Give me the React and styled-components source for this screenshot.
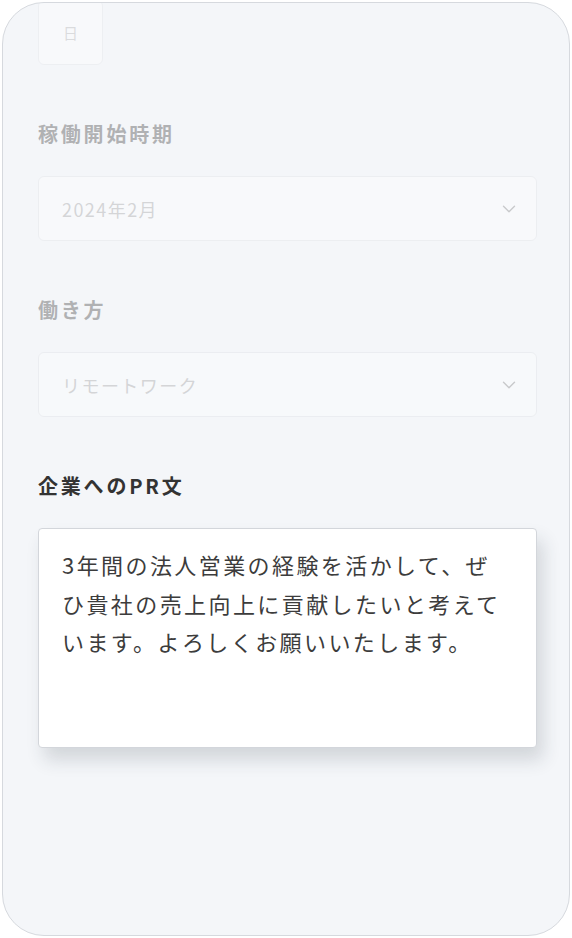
import React from "react";
import styled, { createGlobalStyle } from "styled-components";
import { ChevronDown } from "lucide-react";

const GlobalStyle = createGlobalStyle`
  html, body {
    margin: 0;
    padding: 0;
    background: #ffffff;
  }
  body {
    font-family: "Noto Sans CJK JP", "Noto Sans", sans-serif;
    color: #333;
  }
`;

const Frame = styled.div`
  box-sizing: border-box;
  margin: 2px;
  width: 568px;
  height: 934px;
  border: 1.5px solid #d6d9de;
  border-radius: 42px;
  background: #f4f6f9;
  overflow: hidden;
  padding: 0 33px 0 35px;
`;

const Faded = styled.div`
  opacity: 0.35;
  display: flex;
  flex-direction: column;
  gap: 54px;
`;

const Form = styled.div`
  display: flex;
  flex-direction: column;
  gap: 54px;
`;

const DayBox = styled.div`
  box-sizing: border-box;
  margin-top: -3px;
  width: 65px;
  height: 65px;
  display: flex;
  align-items: center;
  justify-content: center;
  background: #ffffff;
  border: 1px solid #dfe2e6;
  border-radius: 6px;
  font-size: 15px;
  color: #aaa;
`;

const Field = styled.div`
  display: flex;
  flex-direction: column;
  gap: 27px;
`;

const Label = styled.div`
  font-size: 20px;
  line-height: 30px;
  font-weight: 700;
  letter-spacing: 0.14em;
  color: #333;
`;

const Select = styled.div`
  box-sizing: border-box;
  width: 499px;
  height: 65px;
  display: flex;
  align-items: center;
  justify-content: space-between;
  padding: 0 16px 0 23px;
  background: #ffffff;
  border: 1px solid #dcdfe3;
  border-radius: 6px;
  font-size: 18px;
  letter-spacing: 0.08em;
  color: #999;
`;

const TextArea = styled.textarea`
  box-sizing: border-box;
  width: 499px;
  height: 220px;
  margin: 0;
  padding: 16px 30px 16px 23px;
  resize: none;
  outline: none;
  background: #ffffff;
  border: 1px solid #d3d6db;
  border-radius: 4px;
  box-shadow: 6px 12px 18px rgba(40, 50, 60, 0.16);
  font-family: "Noto Sans CJK JP", "Noto Sans", sans-serif;
  font-size: 22px;
  line-height: 38.5px;
  letter-spacing: 0.11em;
  color: #3c3c3c;
  overflow: hidden;
`;

const fields = [
  { label: "稼働開始時期", value: "2024年2月" },
  { label: "働き方", value: "リモートワーク" },
];

const prText =
  "3年間の法人営業の経験を活かして、ぜひ貴社の売上向上に貢献したいと考えています。よろしくお願いいたします。";

export default function App() {
  return (
    <>
      <GlobalStyle />
      <Frame>
        <Form>
          <Faded>
            <DayBox>日</DayBox>
            {fields.map((f) => (
              <Field key={f.label}>
                <Label>{f.label}</Label>
                <Select>
                  <span>{f.value}</span>
                  <ChevronDown size={22} strokeWidth={1.5} color="#777" />
                </Select>
              </Field>
            ))}
          </Faded>
          <Field>
            <Label>企業へのPR文</Label>
            <TextArea readOnly defaultValue={prText} />
          </Field>
        </Form>
      </Frame>
    </>
  );
}
